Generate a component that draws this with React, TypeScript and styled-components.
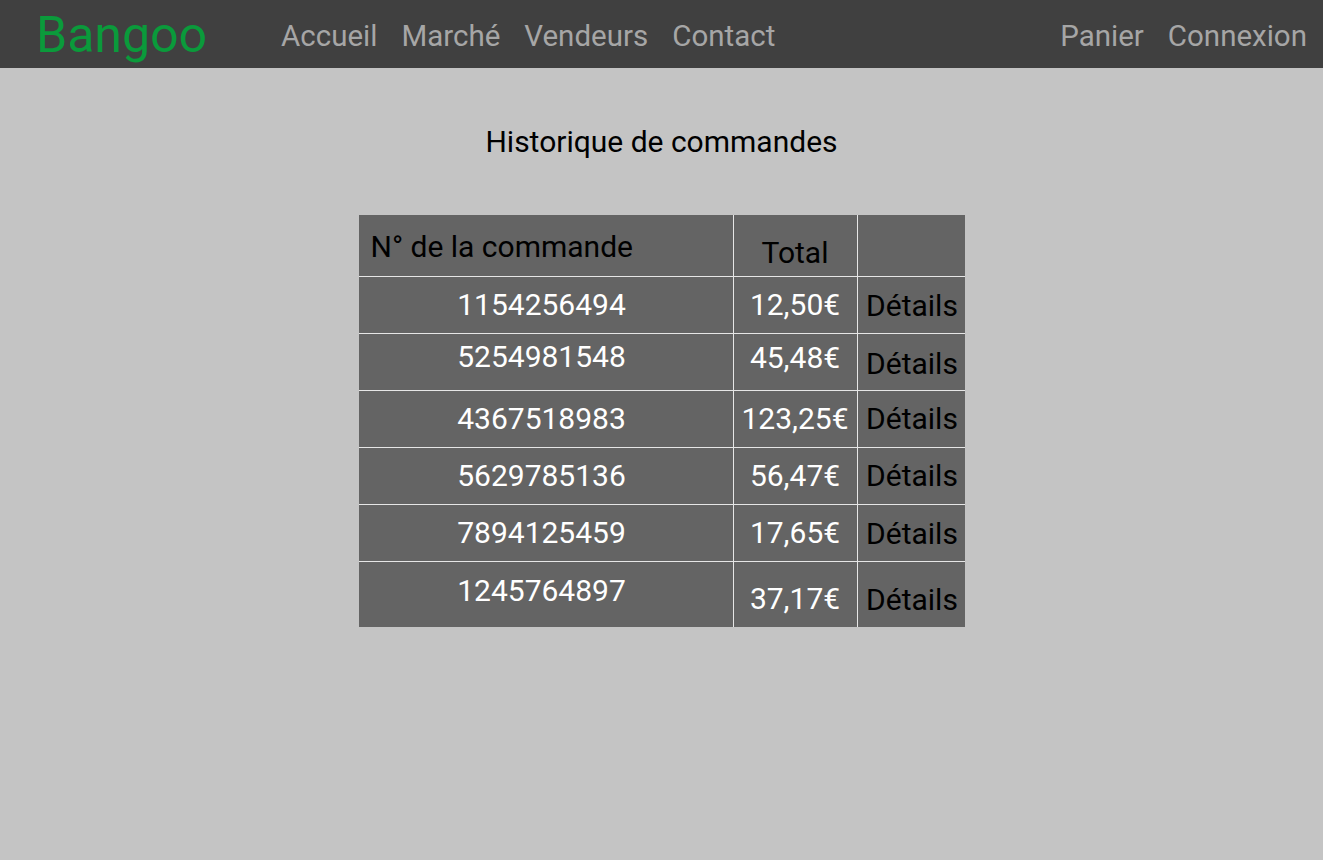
import React from "react";
import styled, { createGlobalStyle } from "styled-components";

const Global = createGlobalStyle`
  html, body { margin: 0; padding: 0; }
  body {
    background: #c4c4c4;
    font-family: Roboto, "Liberation Sans", sans-serif;
    min-height: 860px;
  }
`;

const Page = styled.div`
  display: flex;
  flex-direction: column;
  min-height: 860px;
  background: #c4c4c4;
`;

const NavBar = styled.nav`
  height: 68px;
  background: #404040;
  display: flex;
  align-items: center;
  padding: 0 16px 0 36px;
  box-sizing: border-box;
`;

const Logo = styled.div`
  color: #0b9a3b;
  font-size: 50px;
  line-height: 1;
  margin-right: 74px;
  margin-top: 2px;
`;

const NavGroup = styled.div<{ $right?: boolean }>`
  display: flex;
  gap: 24px;
  margin-top: 6px;
  margin-left: ${(p) => (p.$right ? "auto" : "0")};
`;

const NavLink = styled.a`
  color: #a6a6a6;
  font-size: 29.5px;
  line-height: 1;
  text-decoration: none;
`;

const Main = styled.main`
  display: flex;
  flex-direction: column;
  align-items: center;
  padding-top: 57px;
`;

const Title = styled.h1`
  margin: 0 0 56px;
  font-weight: 400;
  font-size: 30px;
  line-height: 34px;
  color: #000;
`;

const Grid = styled.div`
  display: grid;
  grid-template-columns: 374px 123px 107px;
  grid-template-rows: 61px repeat(5, 56px) 65px;
  gap: 1px;
  background: #e6e6e6;
`;

const Cell = styled.div<{
  $align?: "left" | "center";
  $dark?: boolean;
  $shift?: number;
  $nudge?: number;
}>`
  background: #646464;
  display: flex;
  align-items: center;
  justify-content: ${(p) => (p.$align === "left" ? "flex-start" : "center")};
  padding-left: ${(p) => (p.$align === "left" ? "12px" : "0")};
  color: ${(p) => (p.$dark ? "#000" : "#fff")};
  font-size: 30px;
  line-height: 1;
  white-space: nowrap;
  & > span {
    transform: translate(${(p) => p.$nudge ?? 0}px, ${(p) => p.$shift ?? 0}px);
  }
`;

const rows = [
  { id: "1154256494", total: "12,50€", s: [0, 0, 1] },
  { id: "5254981548", total: "45,48€", s: [-5, -4, 2] },
  { id: "4367518983", total: "123,25€", s: [0, 0, 0] },
  { id: "5629785136", total: "56,47€", s: [0, 0, 0] },
  { id: "7894125459", total: "17,65€", s: [0, 0, 1] },
  { id: "1245764897", total: "37,17€", s: [-4, 4, 5] },
];

export default function App() {
  return (
    <Page>
      <Global />
      <NavBar>
        <Logo>Bangoo</Logo>
        <NavGroup>
          <NavLink>Accueil</NavLink>
          <NavLink>Marché</NavLink>
          <NavLink>Vendeurs</NavLink>
          <NavLink>Contact</NavLink>
        </NavGroup>
        <NavGroup $right>
          <NavLink>Panier</NavLink>
          <NavLink>Connexion</NavLink>
        </NavGroup>
      </NavBar>
      <Main>
        <Title>Historique de commandes</Title>
        <Grid>
          <Cell $align="left" $dark $shift={1}>
            <span>N° de la commande</span>
          </Cell>
          <Cell $dark $shift={7}>
            <span>Total</span>
          </Cell>
          <Cell $dark />
          {rows.map((r) => (
            <React.Fragment key={r.id}>
              <Cell $shift={r.s[0]} $nudge={-4}>
                <span>{r.id}</span>
              </Cell>
              <Cell $shift={r.s[1]}>
                <span>{r.total}</span>
              </Cell>
              <Cell $dark $shift={r.s[2]} $nudge={1}>
                <span>Détails</span>
              </Cell>
            </React.Fragment>
          ))}
        </Grid>
      </Main>
    </Page>
  );
}
